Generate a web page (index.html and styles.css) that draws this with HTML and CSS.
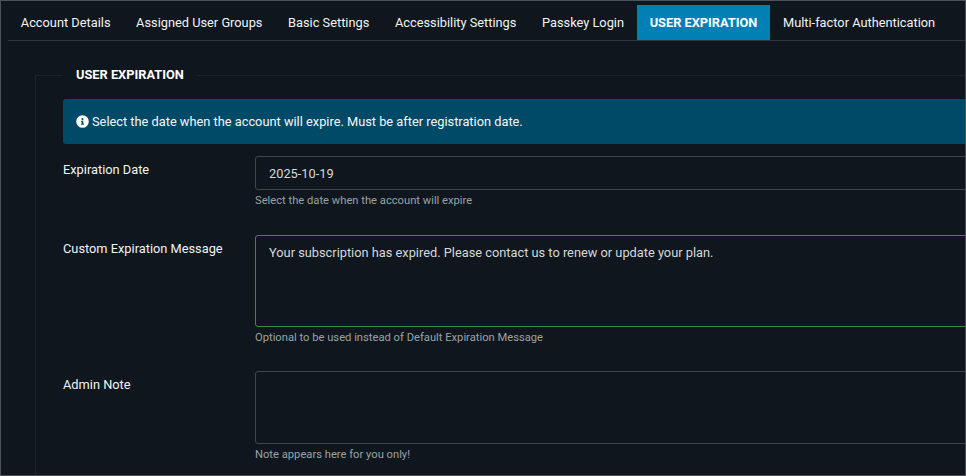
FILE: index.html
```html
<!DOCTYPE html>
<html lang="en">
<head>
    <meta charset="UTF-8">
    <meta name="viewport" content="width=device-width, initial-scale=1.0">
    <title>User Expiration</title>
    <link rel="stylesheet" href="styles.css">
</head>
<body>
    <div class="frame">
        <ul class="tabs">
            <li class="tab">Account Details</li>
            <li class="tab">Assigned User Groups</li>
            <li class="tab">Basic Settings</li>
            <li class="tab">Accessibility Settings</li>
            <li class="tab">Passkey Login</li>
            <li class="tab active">USER EXPIRATION</li>
            <li class="tab">Multi-factor Authentication</li>
        </ul>
        <fieldset class="panel">
            <legend class="panel-title">USER EXPIRATION</legend>
            <div class="alert">
                <svg class="alert-icon" viewBox="0 0 512 512" aria-hidden="true">
                    <path d="M256 8a248 248 0 1 0 0 496 248 248 0 0 0 0-496zm0 110a42 42 0 1 1 0 84 42 42 0 0 1 0-84zm56 254a12 12 0 0 1-12 12h-88a12 12 0 0 1-12-12v-24a12 12 0 0 1 12-12h12v-64h-12a12 12 0 0 1-12-12v-24a12 12 0 0 1 12-12h64a12 12 0 0 1 12 12v100h12a12 12 0 0 1 12 12z"/>
                </svg>
                Select the date when the account will expire. Must be after registration date.
            </div>
            <div class="row row-date">
                <label class="row-label">Expiration Date</label>
                <div class="row-field">
                    <input class="control control-date" type="text" value="2025-10-19">
                    <p class="hint">Select the date when the account will expire</p>
                </div>
            </div>
            <div class="row row-message">
                <label class="row-label">Custom Expiration Message</label>
                <div class="row-field">
                    <textarea class="control control-message">Your subscription has expired. Please contact us to renew or update your plan.</textarea>
                    <p class="hint">Optional to be used instead of Default Expiration Message</p>
                </div>
            </div>
            <div class="row">
                <label class="row-label">Admin Note</label>
                <div class="row-field">
                    <textarea class="control control-note"></textarea>
                    <p class="hint">Note appears here for you only!</p>
                </div>
            </div>
        </fieldset>
    </div>
</body>
</html>
```

FILE: styles.css
```css
* {
    box-sizing: border-box;
}
html, body {
    height: 100%;
}
body {
    margin: 0;
    background-color: #0f161d;
    color: #f1f3f4;
    font-family: Roboto, "Liberation Sans", sans-serif;
    font-size: 12.8px;
    overflow: hidden;
}
.frame {
    height: 100%;
    padding: 4px 0 0 7px;
    border: 1px solid #4d5157;
    overflow: hidden;
}
.tabs {
    display: flex;
    margin: 0;
    padding: 0;
    list-style: none;
    border-bottom: 1px solid #30363c;
}
.tab {
    padding: 0 12.8px;
    height: 35px;
    line-height: 35px;
    white-space: nowrap;
}
.tab.active {
    background-color: #0080b5;
    color: #fff;
    font-weight: 700;
}
.panel {
    width: 1100px;
    margin: 26px 0 0 27px;
    padding: 16px 0 60px 27px;
    min-width: 0;
    border: 1px solid #1b2229;
    border-right: 0;
}
.panel-title {
    padding: 0 13px;
    font-weight: 700;
    line-height: 16px;
    color: #fff;
}
.alert {
    display: flex;
    align-items: center;
    gap: 3px;
    height: 45px;
    padding-left: 13px;
    margin-bottom: 12px;
    background-color: #004a68;
    border-radius: 3px;
    color: #f4f7f8;
}
.alert-icon {
    width: 13px;
    height: 13px;
    fill: #fff;
}
.row {
    display: flex;
}
.row-date {
    margin-bottom: 28px;
}
.row-message {
    margin-bottom: 27px;
}
.row-label {
    width: 192px;
    padding-top: 6px;
    line-height: 15px;
    color: #f1f3f4;
}
.row-field {
    flex: 1;
}
.control {
    display: block;
    width: 100%;
    padding: 9px 13px;
    background-color: #0f161d;
    border: 1px solid #3f454b;
    border-radius: 3px;
    color: #d5d8da;
    font-family: inherit;
    font-size: 12.8px;
    line-height: 16px;
    resize: none;
    outline: none;
}
.control-date {
    height: 34px;
    padding: 8px 13px;
}
.control-message {
    height: 92px;
    border-color: #46834f;
}
.control-note {
    height: 73px;
}
.hint {
    margin: 4px 0 0;
    font-size: 11.2px;
    line-height: 13px;
    color: #98a3a5;
}
```
